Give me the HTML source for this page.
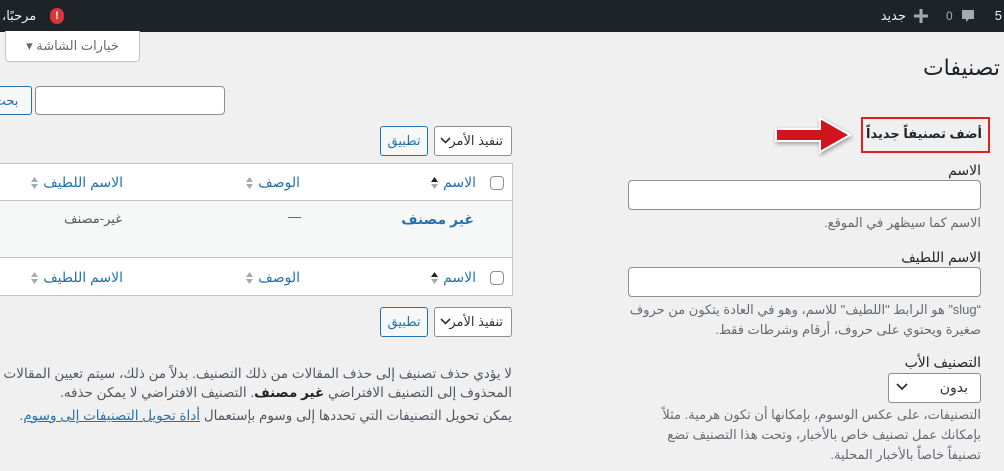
<!DOCTYPE html>
<html lang="ar" dir="rtl"><head><meta charset="utf-8">
<style>
*{box-sizing:border-box;margin:0;padding:0}
html,body{width:1004px;height:471px;overflow:hidden}
body{background:#f0f0f1;font-family:"Liberation Sans","DejaVu Sans",sans-serif;font-size:13px;color:#1d2327;position:relative}
.a{position:absolute}
.bar{left:0;top:0;width:1004px;height:32px;background:#1d2327;color:#f0f0f1}
.r{direction:rtl;text-align:right;white-space:nowrap}
input.t{position:absolute;background:#fff;border:1px solid #8c8f94;border-radius:4px}
.btn{position:absolute;background:#f6f7f7;border:1px solid #2271b1;color:#2271b1;border-radius:3px;text-align:center;line-height:27px}
.sel{position:absolute;background:#fff;border:1px solid #8c8f94;border-radius:3px;color:#2c3338;font-size:14px;line-height:27px;white-space:nowrap}
.help{color:#646970;font-size:13px;line-height:20px}
.th{position:absolute;display:flex;direction:rtl;align-items:center;gap:5px;white-space:nowrap;color:#2271b1;font-size:14px}
.th svg{width:7px;height:14px}
.cb{position:absolute;width:14px;height:14px;border:1px solid #8c8f94;border-radius:4px;background:#fff}
</style></head><body>
<div class="a bar">
  <div class="a" style="right:2px;top:8px;font-size:13px">5</div>
  <svg class="a" style="left:960px;top:8px" width="16" height="16" viewBox="0 0 16 16"><path d="M2 2h12v9H9l-3 3v-3H2z" fill="#a7aaad"/></svg>
  <div class="a" style="left:946px;top:9px;color:#a7aaad;font-size:12px">0</div>
  <svg class="a" style="left:914px;top:9px" width="14" height="14"><path d="M5.5 0h3v5.5H14v3H8.5V14h-3V8.5H0v-3h5.5z" fill="#a7aaad"/></svg>
  <div class="a r" style="right:98px;top:8px;font-size:13px">جديد</div>
  <div class="a r" style="left:2px;top:8px;font-size:13px">مرحبًا،</div>
  <div class="a" style="left:50px;top:8px;width:14px;height:16px;border-radius:7px;background:#d63638;color:#fff;font-size:11px;font-weight:bold;text-align:center;line-height:16px">!</div>
</div>
<div class="a" style="left:5px;top:31px;width:135px;height:31px;background:#fff;border:1px solid #c3c4c7;border-top:none;border-radius:0 0 4px 4px;color:#646970;text-align:center;line-height:30px" dir="rtl">خيارات الشاشة ▾</div>
<div class="a r" style="right:4px;top:55px;font-size:22px">تصنيفات</div>
<input class="t" style="left:35px;top:86px;width:190px;height:29px">
<div class="btn" style="left:-20px;top:86px;width:52px;height:29px">بحث</div>

<div class="a" style="left:861px;top:117px;width:129px;height:36px;border:2px solid #e31e24"></div>
<div class="a r" style="right:22px;top:126px;font-size:13px;font-weight:bold">أضف تصنيفاً جديداً</div>
<svg class="a" style="left:770px;top:112px" width="85" height="46" viewBox="0 0 85 46"><path d="M6 17h44V6l30 17-30 17V29H6z" fill="#d2141c" stroke="#fff" stroke-width="2" style="filter:drop-shadow(1px 2px 2px rgba(0,0,0,.35))"/></svg>

<div class="a r" style="right:23px;top:162px;font-size:14px">الاسم</div>
<input class="t" style="left:628px;top:180px;width:353px;height:30px">
<div class="a r help" style="right:23px;top:213px">الاسم كما سيظهر في الموقع.</div>
<div class="a r" style="right:23px;top:249px;font-size:14px">الاسم اللطيف</div>
<input class="t" style="left:628px;top:267px;width:353px;height:30px">
<div class="a r help" style="right:23px;top:300px;direction:rtl">“slug” هو الرابط "اللطيف" للاسم، وهو في العادة يتكون من حروف<br>صغيرة ويحتوي على حروف، أرقام وشرطات فقط.</div>
<div class="a r" style="right:23px;top:354px;font-size:14px">التصنيف الأب</div>
<div class="sel" style="left:888px;top:373px;width:93px;height:30px;padding-right:12px" dir="rtl">بدون</div>
<svg class="a" style="left:896px;top:383px" width="12" height="9"><path d="M1 1l5 5 5-5" stroke="#2c3338" stroke-width="1.8" fill="none"/></svg>
<div class="a r help" style="right:23px;top:405px">التصنيفات، على عكس الوسوم، بإمكانها أن تكون هرمية. مثلاً<br>بإمكانك عمل تصنيف خاص بالأخبار، وتحت هذا التصنيف تضع<br>تصنيفاً خاصاً بالأخبار المحلية.</div>

<div class="sel" style="left:434px;top:126px;width:78px;height:30px;padding-right:8px;font-size:13px" dir="rtl">تنفيذ الأمر</div>
<svg class="a" style="left:440px;top:137px" width="11" height="8"><path d="M1 1l4.5 4.5L10 1" stroke="#2c3338" stroke-width="1.6" fill="none"/></svg>
<div class="btn" style="left:380px;top:126px;width:48px;height:30px">تطبيق</div>

<div class="a" style="left:-2px;top:163px;width:515px;height:133px;background:#fff;border:1px solid #c3c4c7"></div>
<div class="a" style="left:-1px;top:200px;width:513px;height:58px;background:#f6f7f7;border-top:1px solid #c3c4c7;border-bottom:1px solid #c3c4c7"></div>

<div class="cb" style="left:490px;top:176px"></div>
<div class="th" style="right:528px;top:174px"><span>الاسم</span><svg viewBox="0 0 7 14"><path d="M0 6l3.5-5L7 6z" fill="#1d2327"/><path d="M0 8l3.5 5L7 8z" fill="#a7aaad"/></svg></div>
<div class="th" style="right:704px;top:174px"><span>الوصف</span><svg viewBox="0 0 7 14"><path d="M0 6l3.5-5L7 6z" fill="#a7aaad"/><path d="M0 8l3.5 5L7 8z" fill="#a7aaad"/></svg></div>
<div class="th" style="right:881px;top:174px"><span>الاسم اللطيف</span><svg viewBox="0 0 7 14"><path d="M0 6l3.5-5L7 6z" fill="#a7aaad"/><path d="M0 8l3.5 5L7 8z" fill="#a7aaad"/></svg></div>

<div class="a r" style="right:530px;top:211px;color:#2271b1;font-weight:bold;font-size:14px">غير مصنف</div>
<div class="a" style="left:288px;top:209px;color:#50575e">—</div>
<div class="a r" style="right:882px;top:211px;color:#50575e">غير-مصنف</div>

<div class="cb" style="left:490px;top:271px"></div>
<div class="th" style="right:528px;top:269px"><span>الاسم</span><svg viewBox="0 0 7 14"><path d="M0 6l3.5-5L7 6z" fill="#1d2327"/><path d="M0 8l3.5 5L7 8z" fill="#a7aaad"/></svg></div>
<div class="th" style="right:704px;top:269px"><span>الوصف</span><svg viewBox="0 0 7 14"><path d="M0 6l3.5-5L7 6z" fill="#a7aaad"/><path d="M0 8l3.5 5L7 8z" fill="#a7aaad"/></svg></div>
<div class="th" style="right:881px;top:269px"><span>الاسم اللطيف</span><svg viewBox="0 0 7 14"><path d="M0 6l3.5-5L7 6z" fill="#a7aaad"/><path d="M0 8l3.5 5L7 8z" fill="#a7aaad"/></svg></div>

<div class="sel" style="left:434px;top:307px;width:78px;height:30px;padding-right:8px;font-size:13px" dir="rtl">تنفيذ الأمر</div>
<svg class="a" style="left:440px;top:318px" width="11" height="8"><path d="M1 1l4.5 4.5L10 1" stroke="#2c3338" stroke-width="1.6" fill="none"/></svg>
<div class="btn" style="left:380px;top:307px;width:48px;height:30px">تطبيق</div>

<div class="a" style="left:0;top:360px;width:512px;height:70px;overflow:hidden">
<div class="a r" style="right:0;top:4px;color:#50575e;line-height:19px;font-size:13.5px">لا يؤدي حذف تصنيف إلى حذف المقالات من ذلك التصنيف. بدلاً من ذلك، سيتم تعيين المقالات الموجودة فقط في التصنيف<br>المحذوف إلى التصنيف الافتراضي <b style="color:#1d2327">غير مصنف</b>. التصنيف الافتراضي لا يمكن حذفه.</div>
<div class="a r" style="right:0;top:48px;color:#50575e;font-size:13.5px">يمكن تحويل التصنيفات التي تحددها إلى وسوم بإستعمال <span style="color:#2271b1;text-decoration:underline">أداة تحويل التصنيفات إلى وسوم</span>.</div>
</div>
</body></html>
